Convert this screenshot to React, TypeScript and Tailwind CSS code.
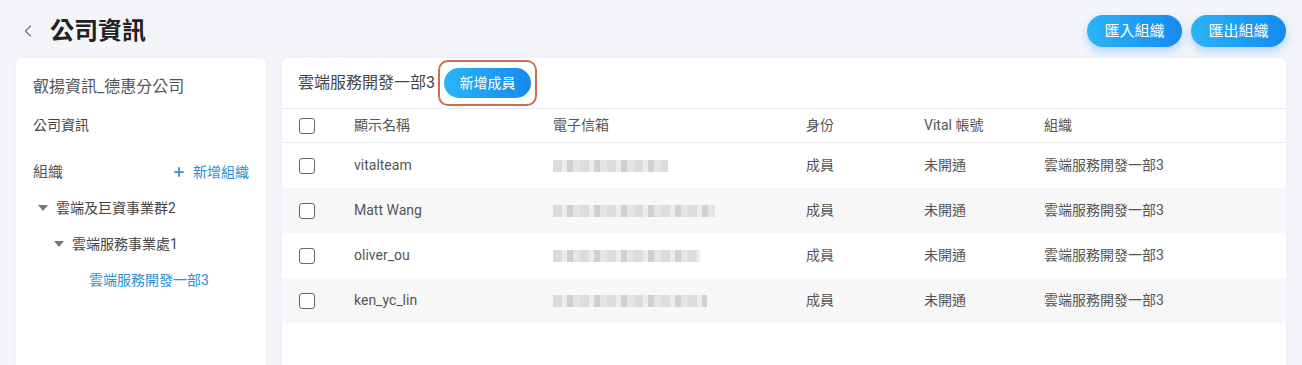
import { ChevronLeft, Plus } from "lucide-react";

const members = [
  { name: "vitalteam", w: "w-[115px]" },
  { name: "Matt Wang", w: "w-[162px]" },
  { name: "oliver_ou", w: "w-[147px]" },
  { name: "ken_yc_lin", w: "w-[154px]" },
];

const font = "font-['Roboto','Noto_Sans_CJK_TC',sans-serif]";
const cols = "grid-cols-[55px_199px_253px_118px_120px_1fr]";

function Checkbox() {
  return <span className="block h-[16px] w-[16px] rounded-[3px] border border-[#666] bg-white" />;
}

function Caret() {
  return (
    <svg width="10" height="6" viewBox="0 0 10 6" className="shrink-0">
      <path d="M0 0 L10 0 L5 6 Z" fill="#777" />
    </svg>
  );
}

export default function App() {
  return (
    <div className={`h-[365px] w-[1302px] overflow-hidden bg-[#f3f5f9] ${font}`}>
      {/* Top bar */}
      <div className="flex h-[58px] items-start justify-between px-[16px]">
        <div className="flex items-center pt-[15px]">
          <ChevronLeft size={20} strokeWidth={1.5} className="ml-[2px] text-[#777]" />
          <h1 className="ml-[12px] text-[24px] leading-[32px] font-bold text-[#222]">公司資訊</h1>
        </div>
        <div className="flex gap-[9px] pt-[15px]">
          {["匯入組織", "匯出組織"].map((t) => (
            <button
              key={t}
              className="h-[32px] w-[95px] rounded-full bg-gradient-to-r from-[#2bb4f6] to-[#1689ef] text-[15px] text-white shadow-[0_4px_10px_rgba(40,150,240,0.35)]"
            >
              {t}
            </button>
          ))}
        </div>
      </div>

      <div className="flex gap-[16px] px-[16px]">
        {/* Left panel */}
        <aside className="h-[320px] w-[250px] shrink-0 rounded-t-[6px] bg-white px-[17px] shadow-[0_0_6px_rgba(0,0,0,0.04)]">
          <div className="pt-[18px] text-[16px] leading-[22px] text-[#555]">叡揚資訊_德惠分公司</div>
          <div className="mt-[17px] text-[14px] leading-[20px] text-[#444]">公司資訊</div>
          <div className="mt-[26px] flex items-center justify-between">
            <span className="text-[15px] leading-[22px] text-[#555]">組織</span>
            <span className="flex items-center gap-[7px] text-[14px] text-[#2b8fd6]">
              <Plus size={14} strokeWidth={3} />
              新增組織
            </span>
          </div>
          <div className="mt-[14px] flex flex-col gap-[14px] text-[14px] leading-[22px]">
            <div className="flex items-center gap-[8px] pl-[5px] text-[#444]">
              <Caret />
              雲端及巨資事業群2
            </div>
            <div className="flex items-center gap-[8px] pl-[21px] text-[#444]">
              <Caret />
              雲端服務事業處1
            </div>
            <div className="pl-[56px] text-[#2b8fd6]">雲端服務開發一部3</div>
          </div>
        </aside>

        {/* Right panel */}
        <main className="h-[320px] w-[1004px] rounded-t-[6px] bg-white shadow-[0_0_6px_rgba(0,0,0,0.04)]">
          <div className="flex h-[50px] items-center pl-[16px]">
            <span className="text-[16px] text-[#444]">雲端服務開發一部3</span>
            <span className="ml-[3px] rounded-[10px] border-2 border-[#c96f4e] px-[4px] py-[6px]">
              <button className="block h-[30px] w-[87px] rounded-full bg-gradient-to-r from-[#2bb4f6] to-[#1689ef] text-[14px] text-white">
                新增成員
              </button>
            </span>
          </div>
          <div className={`grid h-[35px] ${cols} items-center border-y border-[#ececec] pl-[17px] text-[14px] text-[#555]`}>
            <Checkbox />
            <span>顯示名稱</span>
            <span>電子信箱</span>
            <span>身份</span>
            <span>Vital 帳號</span>
            <span>組織</span>
          </div>
          {members.map((m, i) => (
            <div
              key={m.name}
              className={`grid h-[45px] ${cols} items-center pl-[17px] text-[14px] text-[#555] ${
                i % 2 === 1 ? "bg-[#f7f7f7]" : "bg-white"
              }`}
            >
              <Checkbox />
              <span>{m.name}</span>
              <span className={`block h-[12px] ${m.w} overflow-hidden`}>
                <span className="block h-full w-full bg-[repeating-linear-gradient(90deg,#dcdce0_0px,#dcdce0_9px,#ececee_9px,#ececee_14px,#cfcfd4_14px,#cfcfd4_20px,#e4e4e7_20px,#e4e4e7_27px)] blur-[0.6px]" />
              </span>
              <span>成員</span>
              <span>未開通</span>
              <span>雲端服務開發一部3</span>
            </div>
          ))}
        </main>
      </div>
    </div>
  );
}
